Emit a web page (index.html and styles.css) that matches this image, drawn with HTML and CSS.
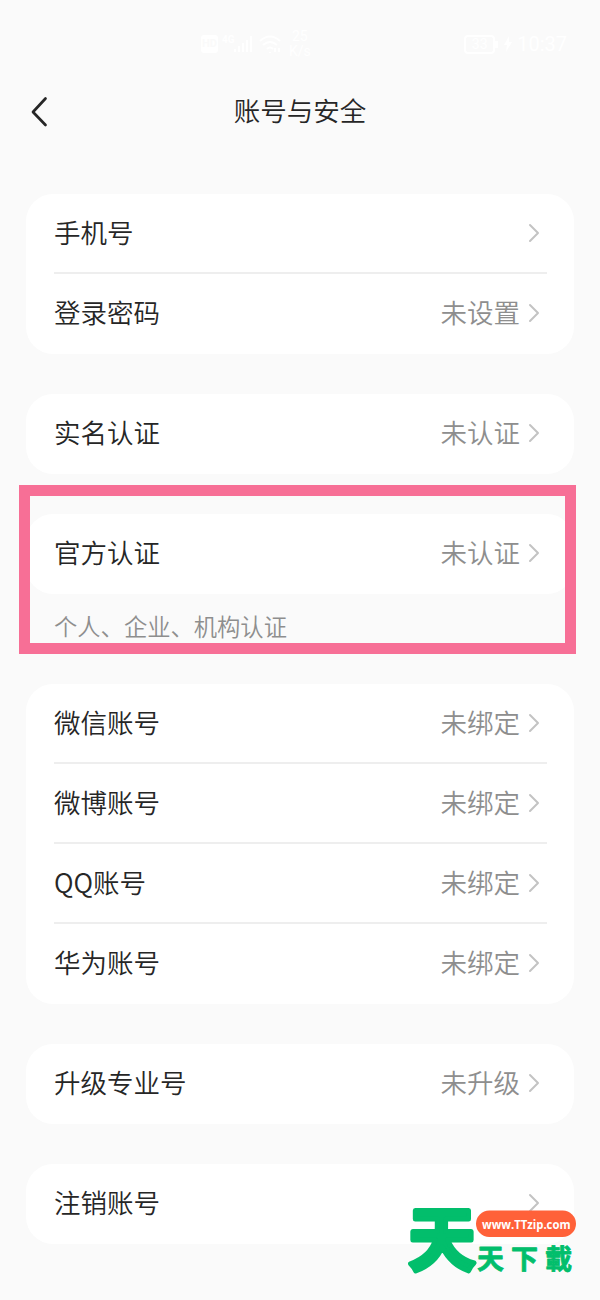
FILE: index.html
```
<!DOCTYPE html>
<html lang="zh-CN">
<head>
<meta charset="utf-8">
<title>账号与安全</title>
<link rel="stylesheet" href="styles.css">
</head>
<body>
<svg class="defs" width="0" height="0"><symbol id="chevron" viewBox="0 0 12 20"><path d="M2 2L10 10L2 18"/></symbol></svg>
<div class="screen">
  <div class="status">
    <div class="status-left">
      <span class="hd">HD</span>
      <svg class="signal" width="32" height="20" viewBox="0 0 32 20"><path d="M13 18v-3M17 18v-6M21 18V9M25 18V6M29 18V2"/><text x="0" y="9">4G</text></svg>
      <svg class="wifi" width="24" height="20" viewBox="0 0 24 20"><path d="M2 7Q12-2 22 7M5 11Q12 5 19 11M9 15Q12 12 15 15M12 18v1M17 14v4M21 14v4"/></svg>
      <span class="speed">25<br>K/s</span>
    </div>
    <div class="status-right"><span class="battery">33</span><svg width="8" height="16" viewBox="0 0 8 16"><path class="bolt" d="M5 0L0 9h3L2 16L8 6H5z"/></svg><span class="clock">10:37</span></div>
  </div>
  <header class="header">
    <svg class="back" width="20" height="34" viewBox="0 0 20 34"><path d="M15.5 3.5L3 17L15.5 30"/></svg>
    <h1 class="title">账号与安全</h1>
  </header>
  <main class="groups">
    <section class="card">
      <div class="row"><span class="label">手机号</span><svg class="arrow"><use href="#chevron"/></svg></div>
      <div class="row"><span class="label">登录密码</span><span class="value">未设置</span><svg class="arrow"><use href="#chevron"/></svg></div>
    </section>
    <section class="card">
      <div class="row"><span class="label">实名认证</span><span class="value">未认证</span><svg class="arrow"><use href="#chevron"/></svg></div>
    </section>
    <div class="official">
      <section class="card">
        <div class="row"><span class="label">官方认证</span><span class="value">未认证</span><svg class="arrow"><use href="#chevron"/></svg></div>
      </section>
      <p class="note">个人、企业、机构认证</p>
      <div class="highlight"></div>
    </div>
    <section class="card">
      <div class="row"><span class="label">微信账号</span><span class="value">未绑定</span><svg class="arrow"><use href="#chevron"/></svg></div>
      <div class="row"><span class="label">微博账号</span><span class="value">未绑定</span><svg class="arrow"><use href="#chevron"/></svg></div>
      <div class="row"><span class="label">QQ账号</span><span class="value">未绑定</span><svg class="arrow"><use href="#chevron"/></svg></div>
      <div class="row"><span class="label">华为账号</span><span class="value">未绑定</span><svg class="arrow"><use href="#chevron"/></svg></div>
    </section>
    <section class="card">
      <div class="row"><span class="label">升级专业号</span><span class="value">未升级</span><svg class="arrow"><use href="#chevron"/></svg></div>
    </section>
    <section class="card">
      <div class="row"><span class="label">注销账号</span><svg class="arrow"><use href="#chevron"/></svg></div>
    </section>
  </main>
  <svg class="watermark" width="172" height="76" viewBox="0 0 172 76">
    <text class="mark-big" x="4.5" y="60" textLength="67" lengthAdjust="spacingAndGlyphs">天</text>
    <rect class="pill" x="72" y="5.5" width="100" height="26.5" rx="13.25"/>
    <text class="url" x="78" y="24" textLength="88.5" lengthAdjust="spacingAndGlyphs">www.TTzip.com</text>
    <text class="mark-small" y="63.5"><tspan x="73">天</tspan><tspan x="107">下</tspan><tspan x="141">載</tspan></text>
  </svg>
</div>
</body>
</html>
```
FILE: styles.css
```
body {
  margin: 0;
  background: #fafafa;
  color: #262626;
  font-family: "Noto Sans CJK SC", sans-serif;
}
.defs { position: absolute; }
.screen {
  position: relative;
  height: 1300px;
  overflow: hidden;
}
.status {
  display: flex;
  justify-content: space-between;
  align-items: center;
  box-sizing: border-box;
  height: 88px;
  padding: 0 33px 0 201px;
  color: #fff;
  font-family: Roboto, sans-serif;
}
.status-left, .status-right { display: flex; align-items: center; }
.status-left { gap: 4px; }
.status-right { gap: 5px; }
.status path { fill: none; stroke: #fff; stroke-width: 2; }
.status .bolt { fill: #fff; stroke: none; }
.signal text { fill: #fff; font-size: 10px; font-weight: 700; }
.hd {
  padding: 1px 1px;
  border-radius: 3px;
  background: #fff;
  color: #fafafa;
  font: 700 11px/16px Roboto, sans-serif;
}
.speed { margin-left: 3px; font-size: 14px; line-height: 15px; text-align: center; }
.battery {
  position: relative;
  width: 27px;
  margin-right: 4px;
  border: 2px solid #fff;
  border-radius: 4px;
  font-size: 14px;
  line-height: 15px;
  text-align: center;
}
.battery::after {
  content: "";
  position: absolute;
  top: 4px;
  right: -5px;
  width: 3px;
  height: 7px;
  background: #fff;
}
.clock { font-size: 20px; }
.header {
  display: grid;
  grid-template-columns: 60px 1fr 60px;
  align-items: center;
  height: 48px;
}
.back { margin-left: 30px; }
.back path {
  fill: none;
  stroke: #262626;
  stroke-width: 2.7;
  stroke-linecap: round;
  stroke-linejoin: round;
}
.title {
  margin: 0;
  padding-bottom: 4px;
  font-size: 26.5px;
  font-weight: 350;
  line-height: 44px;
  text-align: center;
}
.groups {
  display: flex;
  flex-direction: column;
  gap: 40px;
  padding: 57.5px 26px 0;
}
.card {
  padding: 0 27px 0 28px;
  border-radius: 27px;
  background: #fff;
}
.row {
  display: flex;
  align-items: center;
  box-sizing: border-box;
  height: 80px;
  padding: 0 7px 1px 0;
  font-size: 26.5px;
  font-weight: 350;
  line-height: 40px;
}
.row + .row {
  margin-top: -1.5px;
  height: 81.5px;
  padding-top: 1.5px;
  background: linear-gradient(#eee, #eee) 0 0 / 100% 2px no-repeat;
}
.label, .value { padding-bottom: 2px; }
.label { flex: 1; }
.value { color: #8e8e8e; }
.arrow {
  width: 12px;
  height: 20px;
  margin-left: 8px;
  fill: none;
  stroke: #c3c3c3;
  stroke-width: 2;
  stroke-linecap: round;
  stroke-linejoin: round;
}
.official { position: relative; height: 130px; }
.note {
  margin: 15.5px 28px 0;
  color: #8e8e8e;
  font-size: 23.3px;
  font-weight: 350;
  line-height: 34px;
}
.highlight {
  position: absolute;
  top: -28.5px;
  left: -7px;
  width: 535px;
  height: 147px;
  border: 11px solid #f76f96;
}
.watermark {
  position: absolute;
  left: 404px;
  top: 1205px;
  overflow: visible;
}
.mark-big, .mark-small {
  fill: #02be6c;
  stroke: #02be6c;
  stroke-linejoin: round;
  font-family: "Noto Sans CJK SC", sans-serif;
  font-weight: 700;
}
.mark-big { font-size: 69px; stroke-width: 5px; }
.mark-small { font-size: 27px; stroke-width: .8px; }
.pill { fill: #ff6139; }
.url { fill: #fff; font: 700 12.5px "Open Sans", sans-serif; }
```
